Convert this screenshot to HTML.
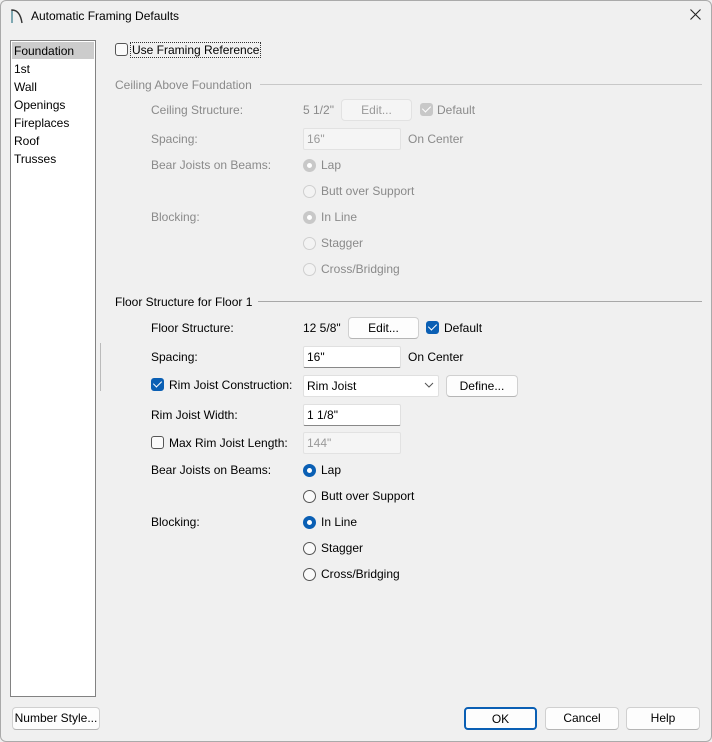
<!DOCTYPE html><html><head><style>
body{margin:0;width:712px;height:742px;background:#f0f0f0;font-family:"Liberation Sans",sans-serif;font-size:12px;color:#000;position:relative;overflow:hidden}
.a{position:absolute;white-space:nowrap;line-height:14px}
.g{color:#8a8a8a}
.btn{position:absolute;background:#fdfdfd;border:1px solid #d0d0d0;border-bottom-color:#b5b5b5;border-radius:4px;text-align:center;box-sizing:border-box;line-height:20px}
.btn.d{background:#f5f5f5;color:#9a9a9a;border-color:#e2e2e2}
.in{position:absolute;background:#fff;border:1px solid #e0e0e0;border-bottom:1px solid #888;box-sizing:border-box;height:22px;line-height:20px;padding-left:3px;border-radius:2px}
.in.d{background:#f5f5f5;color:#9a9a9a;border-color:#e2e2e2}
.cb{position:absolute;width:13px;height:13px;border:1px solid #555;border-radius:3px;box-sizing:border-box;background:#fafafa}
.cb.on{background:#0a5fb4;border-color:#0a5fb4}
.cb.dis{background:#c8c8c8;border-color:#c8c8c8}
.cb.on:after,.cb.dis:after{content:"";position:absolute;left:3px;top:0px;width:4px;height:7px;border:solid #fff;border-width:0 1.5px 1.5px 0;transform:rotate(45deg)}
.rb{position:absolute;width:13px;height:13px;border:1px solid #555;border-radius:50%;box-sizing:border-box;background:#fafafa}
.rb.on{background:#fff;border:4px solid #0a5fb4}
.rb.d{border-color:#cfcfcf;background:#f3f3f3}
.rb.don{border:4px solid #c8c8c8;background:#fff}
.line{position:absolute;height:1px;background:#a8a8a8}
</style></head><body>
<div style="position:absolute;inset:0;border:1px solid #aaa;border-radius:6px;box-sizing:border-box"></div>
<svg class="a" style="left:10px;top:8px" width="14" height="16"><path d="M2 15V2Q10 2 12 15" fill="none" stroke="#333" stroke-width="1.4"/><path d="M2 15V3" stroke="#6ab" stroke-width="1.2"/></svg>
<div class="a" style="left:31px;top:9px">Automatic Framing Defaults</div>
<svg class="a" style="left:690px;top:9px" width="11" height="11"><path d="M0.5 0.5L10.5 10.5M10.5 0.5L0.5 10.5" stroke="#222" stroke-width="1.1"/></svg>

<div style="position:absolute;left:10px;top:40px;width:86px;height:657px;background:#fff;border:1px solid #828282;box-sizing:border-box"></div>
<div style="position:absolute;left:12px;top:42px;width:82px;height:17px;background:#cccccc"></div>
<div class="a" style="left:14px;top:44px">Foundation</div>
<div class="a" style="left:14px;top:62px">1st</div>
<div class="a" style="left:14px;top:80px">Wall</div>
<div class="a" style="left:14px;top:98px">Openings</div>
<div class="a" style="left:14px;top:116px">Fireplaces</div>
<div class="a" style="left:14px;top:134px">Roof</div>
<div class="a" style="left:14px;top:152px">Trusses</div>
<div style="position:absolute;left:100px;top:343px;width:1px;height:48px;background:#bbb"></div>

<div class="cb" style="left:115px;top:43px"></div>
<div class="a" style="left:131px;top:43px;outline:1px dotted #333;padding:0 1px">Use Framing Reference</div>

<div class="a g" style="left:115px;top:78px">Ceiling Above Foundation</div>
<div class="line" style="left:260px;top:84px;width:442px;background:#c8c8c8"></div>
<div class="a g" style="left:151px;top:103px">Ceiling Structure:</div>
<div class="a g" style="left:303px;top:103px">5 1/2"</div>
<div class="btn d" style="left:341px;top:99px;width:71px;height:22px">Edit...</div>
<div class="cb dis" style="left:420px;top:103px"></div>
<div class="a g" style="left:437px;top:103px">Default</div>
<div class="a g" style="left:151px;top:132px">Spacing:</div>
<div class="in d" style="left:303px;top:128px;width:98px">16"</div>
<div class="a g" style="left:408px;top:132px">On Center</div>
<div class="a g" style="left:151px;top:158px">Bear Joists on Beams:</div>
<div class="rb don" style="left:303px;top:159px"></div><div class="a g" style="left:321px;top:158px">Lap</div>
<div class="rb d" style="left:303px;top:185px"></div><div class="a g" style="left:321px;top:184px">Butt over Support</div>
<div class="a g" style="left:151px;top:210px">Blocking:</div>
<div class="rb don" style="left:303px;top:211px"></div><div class="a g" style="left:321px;top:210px">In Line</div>
<div class="rb d" style="left:303px;top:237px"></div><div class="a g" style="left:321px;top:236px">Stagger</div>
<div class="rb d" style="left:303px;top:263px"></div><div class="a g" style="left:321px;top:262px">Cross/Bridging</div>

<div class="a" style="left:115px;top:295px">Floor Structure for Floor 1</div>
<div class="line" style="left:258px;top:301px;width:444px"></div>
<div class="a" style="left:151px;top:321px">Floor Structure:</div>
<div class="a" style="left:303px;top:321px">12 5/8"</div>
<div class="btn" style="left:348px;top:317px;width:71px;height:22px">Edit...</div>
<div class="cb on" style="left:426px;top:321px"></div>
<div class="a" style="left:444px;top:321px">Default</div>
<div class="a" style="left:151px;top:350px">Spacing:</div>
<div class="in" style="left:303px;top:346px;width:98px">16"</div>
<div class="a" style="left:408px;top:350px">On Center</div>
<div class="cb on" style="left:151px;top:378px"></div>
<div class="a" style="left:169px;top:378px">Rim Joist Construction:</div>
<div class="in" style="left:303px;top:375px;width:136px;border-bottom-color:#e0e0e0">Rim Joist</div>
<svg class="a" style="left:424px;top:382px" width="10" height="6"><path d="M1 1l4 4 4-4" fill="none" stroke="#555"/></svg>
<div class="btn" style="left:446px;top:375px;width:72px;height:22px">Define...</div>
<div class="a" style="left:151px;top:408px">Rim Joist Width:</div>
<div class="in" style="left:303px;top:404px;width:98px">1 1/8"</div>
<div class="cb" style="left:151px;top:436px"></div>
<div class="a" style="left:169px;top:436px">Max Rim Joist Length:</div>
<div class="in d" style="left:303px;top:432px;width:98px">144"</div>
<div class="a" style="left:151px;top:463px">Bear Joists on Beams:</div>
<div class="rb on" style="left:303px;top:464px"></div><div class="a" style="left:321px;top:463px">Lap</div>
<div class="rb" style="left:303px;top:490px"></div><div class="a" style="left:321px;top:489px">Butt over Support</div>
<div class="a" style="left:151px;top:515px">Blocking:</div>
<div class="rb on" style="left:303px;top:516px"></div><div class="a" style="left:321px;top:515px">In Line</div>
<div class="rb" style="left:303px;top:542px"></div><div class="a" style="left:321px;top:541px">Stagger</div>
<div class="rb" style="left:303px;top:568px"></div><div class="a" style="left:321px;top:567px">Cross/Bridging</div>

<div class="btn" style="left:12px;top:707px;width:88px;height:23px">Number Style...</div>
<div class="btn" style="left:464px;top:707px;width:73px;height:23px;border:2px solid #0a5fb4">OK</div>
<div class="btn" style="left:545px;top:707px;width:74px;height:23px">Cancel</div>
<div class="btn" style="left:626px;top:707px;width:74px;height:23px">Help</div>
</body></html>
